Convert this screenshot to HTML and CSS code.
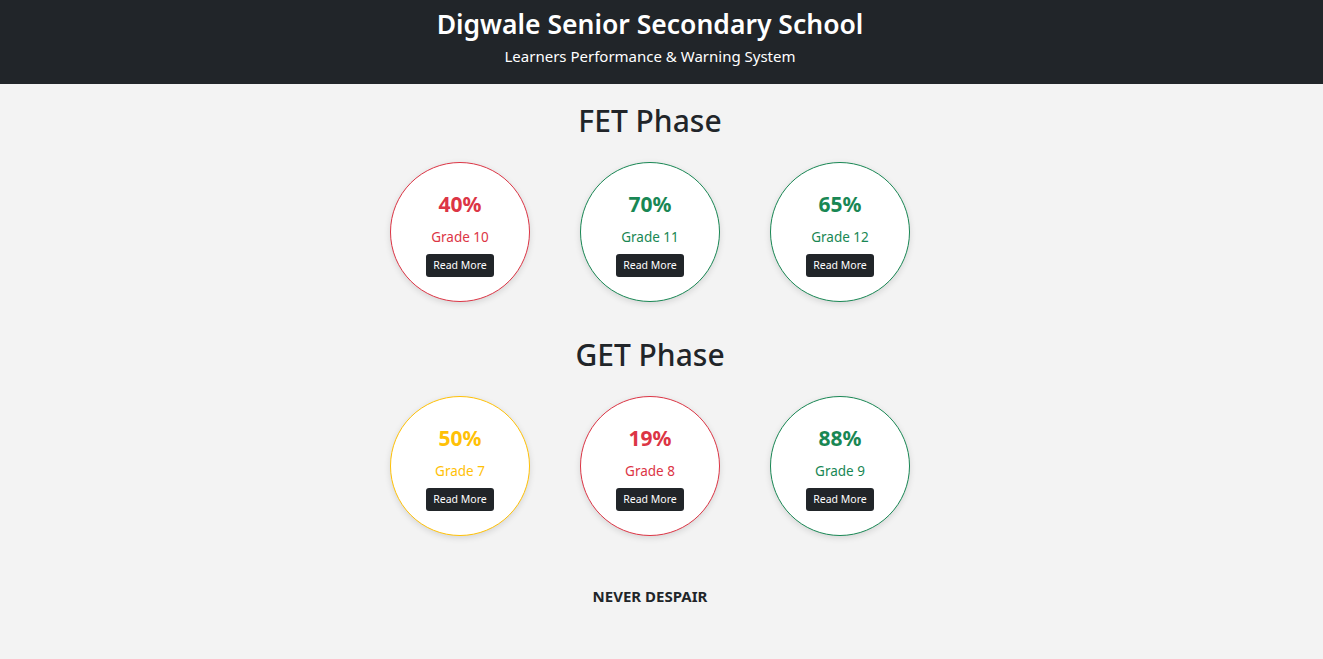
FILE: index.html
```html
<!DOCTYPE html>
<html>
<head>
<meta charset="utf-8">
<link rel="stylesheet" href="styles.css">
</head>
<body>
<header class="top">
  <h1 class="title">Digwale Senior Secondary School</h1>
  <p class="subtitle">Learners Performance &amp; Warning System</p>
</header>
<main class="content">
  <section class="phase">
    <h2 class="phase-title">FET Phase</h2>
    <div class="circles">
      <div class="circle red"><div class="pct">40%</div><div class="grade">Grade 10</div><a class="btn">Read More</a></div>
      <div class="circle green"><div class="pct">70%</div><div class="grade">Grade 11</div><a class="btn">Read More</a></div>
      <div class="circle green"><div class="pct">65%</div><div class="grade">Grade 12</div><a class="btn">Read More</a></div>
    </div>
  </section>
  <section class="phase">
    <h2 class="phase-title">GET Phase</h2>
    <div class="circles">
      <div class="circle yellow"><div class="pct">50%</div><div class="grade">Grade 7</div><a class="btn">Read More</a></div>
      <div class="circle red"><div class="pct">19%</div><div class="grade">Grade 8</div><a class="btn">Read More</a></div>
      <div class="circle green"><div class="pct">88%</div><div class="grade">Grade 9</div><a class="btn">Read More</a></div>
    </div>
  </section>
  <p class="motto">NEVER DESPAIR</p>
</main>
</body>
</html>
```
FILE: styles.css
```css
* { box-sizing: border-box; }
html, body { background: #f3f3f3; }
body {
  margin: 0;
  color: #212529;
  font-family: "Noto Sans", "Open Sans", sans-serif;
}
.top {
  background: #212529;
  color: #fff;
  height: 84px;
  display: flex;
  flex-direction: column;
  align-items: center;
  padding: 6px 23px 0 0;
}
.title {
  margin: 0;
  font-size: 26.5px;
  font-weight: 600;
  line-height: 36px;
}
.subtitle {
  margin: 3px 0 0;
  font-size: 15px;
  line-height: 22px;
}
.content {
  display: flex;
  flex-direction: column;
  align-items: center;
  padding-right: 23px;
}
.phase {
  display: flex;
  flex-direction: column;
  align-items: center;
}
.phase-title {
  margin: 16px 0 0;
  font-size: 30px;
  font-weight: 500;
  line-height: 42px;
}
.circles {
  display: flex;
  gap: 50px;
  margin-top: 20px;
  margin-bottom: 16px;
}
.circle {
  width: 140px;
  height: 140px;
  border-radius: 50%;
  background: #fff;
  border: 1px solid;
  box-shadow: 0 2px 6px rgba(0,0,0,0.12);
  display: flex;
  flex-direction: column;
  align-items: center;
  padding-top: 27px;
}
.red { border-color: #dc3545; color: #dc3545; }
.green { border-color: #198754; color: #198754; }
.yellow { border-color: #ffc107; color: #ffc107; }
.pct {
  font-size: 21px;
  font-weight: 700;
  line-height: 28px;
}
.grade {
  margin-top: 9px;
  font-size: 13.5px;
  line-height: 20px;
}
.btn {
  margin-top: 7px;
  background: #212529;
  color: #fff;
  font-size: 10.5px;
  line-height: 15px;
  padding: 4px 7px;
  border-radius: 3px;
}
.motto {
  margin: 34px 0 0;
  font-size: 15px;
  font-weight: 700;
  line-height: 20px;
}
```
